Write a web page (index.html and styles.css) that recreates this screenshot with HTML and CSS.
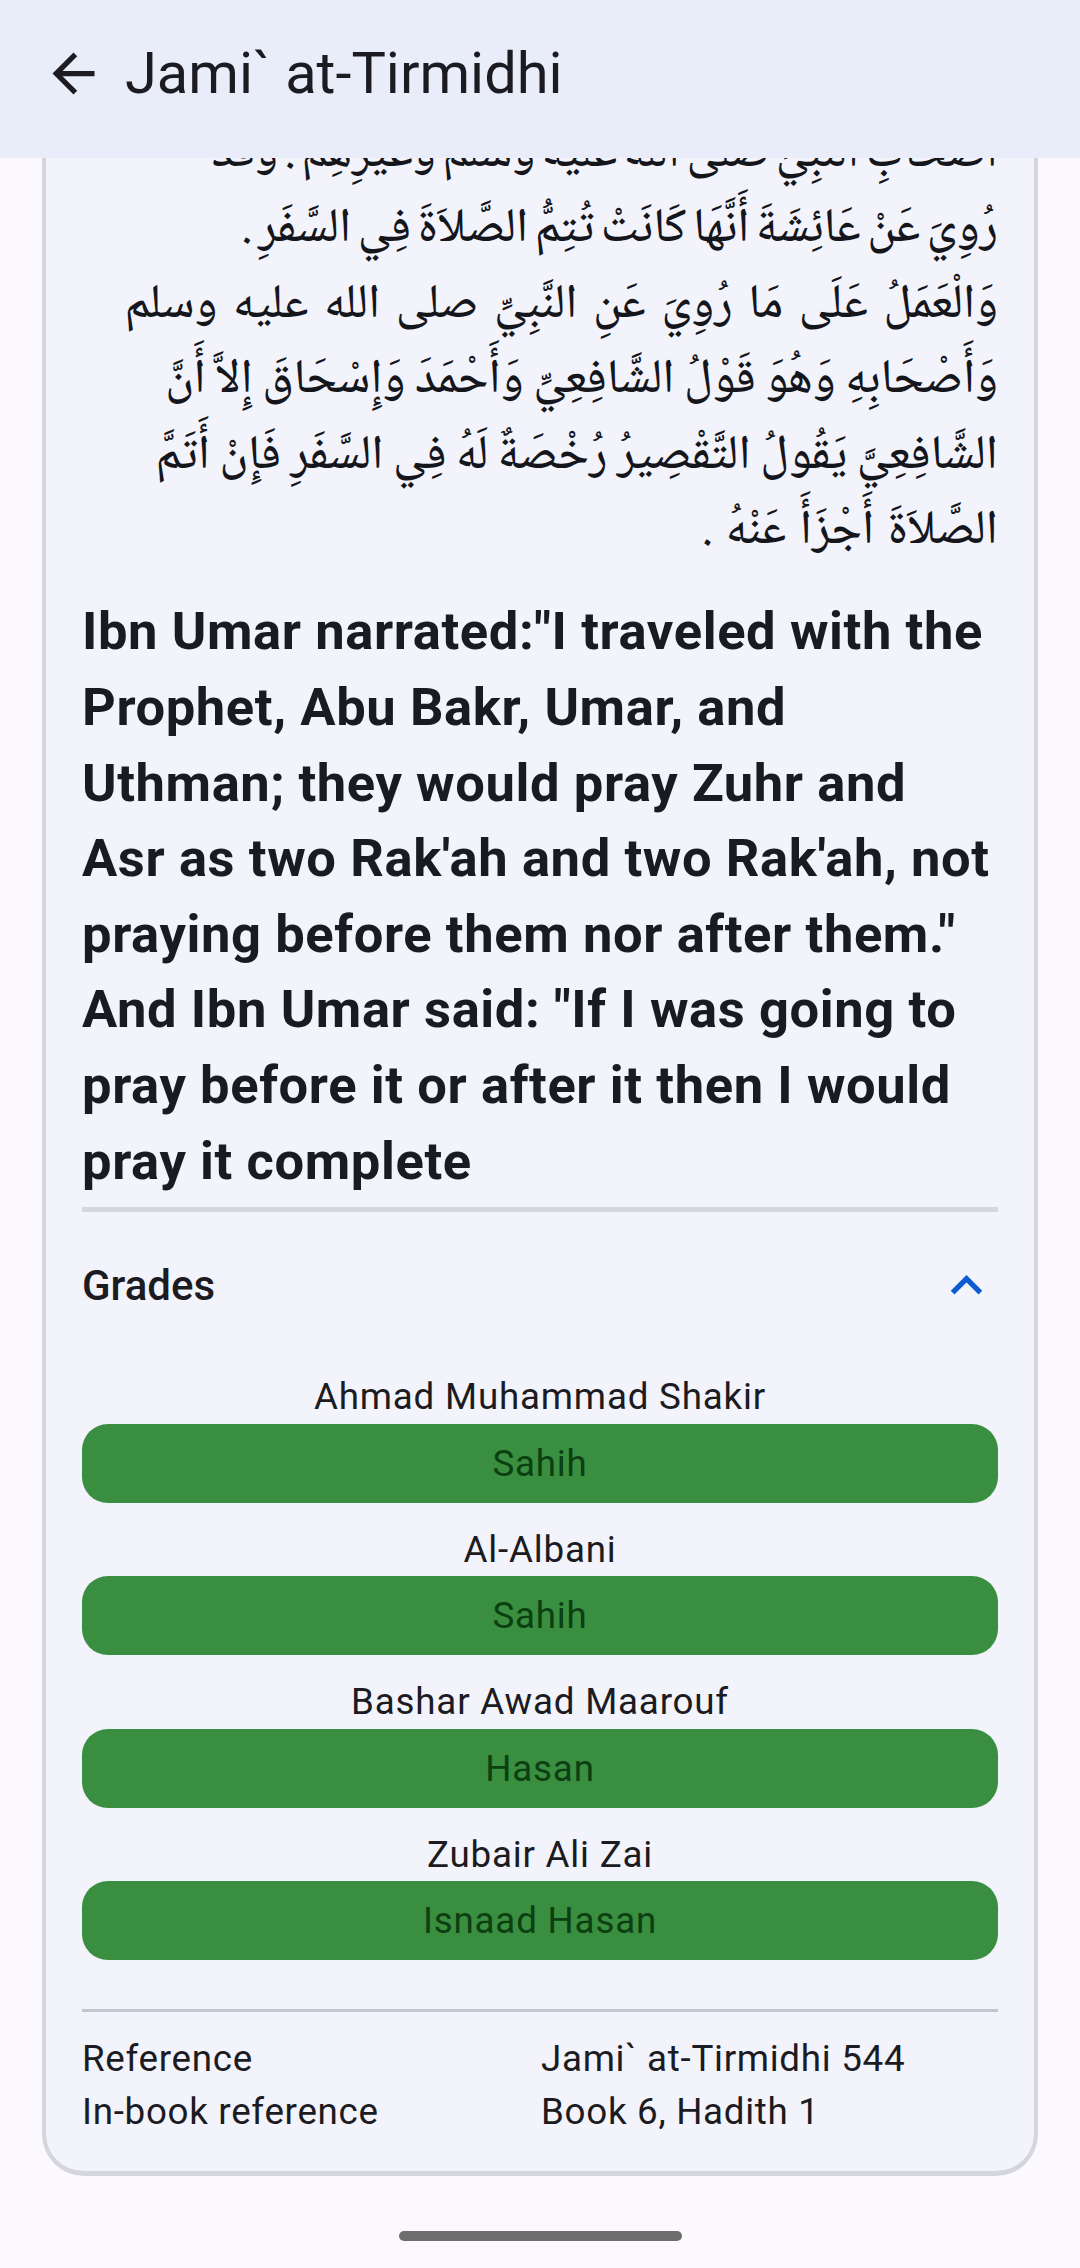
FILE: index.html
```
<!DOCTYPE html>
<html lang="en">
<head>
<meta charset="utf-8">
<title>Jami` at-Tirmidhi</title>
<link rel="stylesheet" href="styles.css">
</head>
<body>
<header class="appbar">
  <div class="appbar-icon">
    <svg viewBox="0 0 24 24" width="63" height="63"><path d="M20 11H7.830l5.590-5.590L12 4l-8 8 8 8 1.410-1.410L7.830 13H20v-2z" fill="#1b1b21"/></svg>
  </div>
  <h1 class="appbar-title">Jami` at-Tirmidhi</h1>
</header>
<main class="page">
  <section class="card">
    <div class="arabic" dir="rtl" lang="ar">
      <div class="ar-line ar-tight">أَصْحَابِ النَّبِيِّ صلى الله عليه وسلم وَغَيْرِهِمْ . وَقَدْ</div>
      <div class="ar-line ar-tight">رُوِيَ عَنْ عَائِشَةَ أَنَّهَا كَانَتْ تُتِمُّ الصَّلاَةَ فِي السَّفَرِ .</div>
      <div class="ar-line ar-wide">وَالْعَمَلُ عَلَى مَا رُوِيَ عَنِ النَّبِيِّ صلى الله عليه وسلم</div>
      <div class="ar-line ar-snug">وَأَصْحَابِهِ وَهُوَ قَوْلُ الشَّافِعِيِّ وَأَحْمَدَ وَإِسْحَاقَ إِلاَّ أَنَّ</div>
      <div class="ar-line ar-snug">الشَّافِعِيَّ يَقُولُ التَّقْصِيرُ رُخْصَةٌ لَهُ فِي السَّفَرِ فَإِنْ أَتَمَّ</div>
      <div class="ar-line ar-end">الصَّلاَةَ أَجْزَأَ عَنْهُ .</div>
    </div>
    <p class="english">Ibn Umar narrated:"I traveled with the<br>Prophet, Abu Bakr, Umar, and<br>Uthman; they would pray Zuhr and<br>Asr as two Rak'ah and two Rak'ah, not<br>praying before them nor after them."<br>And Ibn Umar said: "If I was going to<br>pray before it or after it then I would<br>pray it complete</p>
    <hr class="divider divider-thick">
    <div class="grades-head">
      <span class="grades-title">Grades</span>
      <svg class="chevron" viewBox="0 0 24 24" width="63" height="63"><path d="M12 8l-6 6 1.410 1.410L12 10.830l4.590 4.580L18 14z" fill="#0b5bd3"/></svg>
    </div>
    <ul class="grades">
      <li class="grade"><div class="grade-name">Ahmad Muhammad Shakir</div><div class="grade-badge">Sahih</div></li>
      <li class="grade"><div class="grade-name">Al-Albani</div><div class="grade-badge">Sahih</div></li>
      <li class="grade"><div class="grade-name">Bashar Awad Maarouf</div><div class="grade-badge">Hasan</div></li>
      <li class="grade"><div class="grade-name">Zubair Ali Zai</div><div class="grade-badge">Isnaad Hasan</div></li>
    </ul>
    <hr class="divider divider-thin">
    <dl class="refs">
      <dt>Reference</dt><dd>Jami` at-Tirmidhi 544</dd>
      <dt>In-book reference</dt><dd>Book 6, Hadith 1</dd>
    </dl>
  </section>
  <div class="home-indicator"></div>
</main>
</body>
</html>
```

FILE: styles.css
```
* { box-sizing: border-box; }
html, body { margin: 0; padding: 0; }
body {
  width: 1080px;
  height: 2268px;
  overflow: hidden;
  background: #fcf9fe;
  font-family: Roboto, "Noto Sans", sans-serif;
  color: #1b1b21;
}
.appbar {
  position: fixed;
  top: 0; left: 0; right: 0;
  height: 158px;
  background: #e9ecf9;
  display: flex;
  align-items: flex-start;
  padding: 42px 0 0 42px;
  z-index: 10;
}
.appbar-icon { width: 63px; height: 63px; display: flex; }
.appbar-title {
  margin: 0 0 0 20px;
  font-size: 57.75px;
  font-weight: 400;
  line-height: 63px;
  color: #1b1b21;
  white-space: nowrap;
}
.page { display: flex; flex-direction: column; align-items: center; }
.card {
  width: 996px;
  margin-top: 90px;
  background: #f2f3fb;
  border: 4px solid #d5d6dd;
  border-bottom-width: 5px;
  border-radius: 42px;
  padding: 0 36px 33px;
}
.arabic {
  margin-top: 24px;
  font-family: "Noto Naskh Arabic", "Noto Sans Arabic", "DejaVu Sans", serif;
  font-size: 48px;
  font-weight: 500;
  line-height: 75.4px;
  text-align: right;
  color: #15161c;
}
.ar-line { white-space: nowrap; }
.ar-tight { word-spacing: -4px; }
.ar-wide { word-spacing: 5px; }
.ar-snug { word-spacing: -1px; }
.ar-end { word-spacing: 3px; }
.english {
  margin: 24px 0 0;
  font-size: 52.5px;
  font-weight: 700;
  line-height: 75.6px;
  letter-spacing: 0.6px;
  white-space: nowrap;
  color: #1a1b22;
}
.divider { border: 0; margin: 0; }
.divider-thick { margin-top: 8px; height: 5px; background: #d5d6de; }
.divider-thin { margin-top: 49px; height: 3px; background: #c4c6cf; }
.grades-head {
  margin-top: 42px;
  height: 63px;
  display: flex;
  align-items: center;
  justify-content: space-between;
}
.grades-title { font-size: 42px; font-weight: 500; line-height: 63px; }
.chevron { display: block; }
.grades {
  list-style: none;
  margin: 54px 0 0;
  padding: 0;
  display: flex;
  flex-direction: column;
  gap: 21px;
}
.grade { display: flex; flex-direction: column; }
.grade-name {
  text-align: center;
  font-size: 36.75px;
  line-height: 52.5px;
  letter-spacing: 0.8px;
}
.grade-badge {
  height: 79px;
  border-radius: 26px;
  background: #3a8e3f;
  color: #0c3f12;
  display: flex;
  align-items: center;
  justify-content: center;
  font-size: 36.75px;
  letter-spacing: 0.8px;
}
.refs {
  margin: 20px 0 0;
  display: grid;
  grid-template-columns: 1fr 1fr;
  font-size: 36.75px;
  line-height: 53px;
  letter-spacing: 0.7px;
}
.refs dt, .refs dd { margin: 0; }
.refs dd { padding-left: 1px; }
.home-indicator {
  width: 283px;
  height: 10px;
  border-radius: 5px;
  background: #6e6e6e;
  margin-top: 55px;
}
```
